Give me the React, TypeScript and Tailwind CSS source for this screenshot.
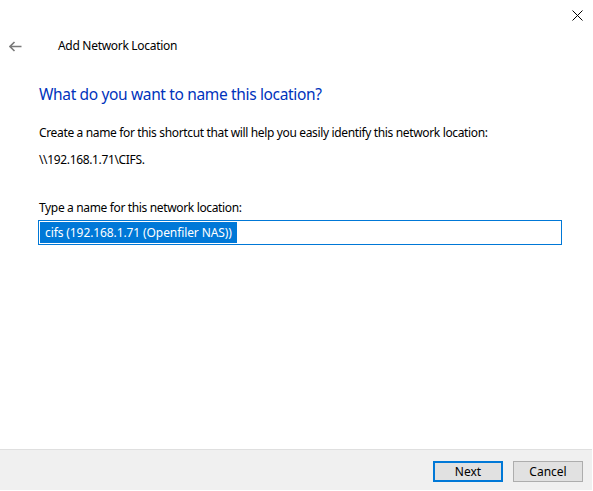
import React from "react";

export default function App() {
  const font = { fontFamily: '"Segoe UI", "Noto Sans", "Open Sans", sans-serif' };
  return (
    <div className="w-[593px] h-[491px] bg-white flex flex-col text-black overflow-hidden" style={font}>
      <div className="h-[32px] flex justify-end items-start">
        <div className="w-[30px] h-[30px] mr-[1px] flex items-center justify-center">
          <svg width="11" height="11" viewBox="0 0 11 11">
            <path d="M0.5 0.5 L10.5 10.5 M10.5 0.5 L0.5 10.5" stroke="#000" strokeWidth="1" />
          </svg>
        </div>
      </div>
      <div className="flex items-center h-[28px]">
        <div className="w-[58px] pl-[9px] flex items-center">
          <svg width="13" height="11" viewBox="0 0 13 11">
            <path d="M12.5 5.5 H1.5 M5.5 1 L1 5.5 L5.5 10" stroke="#7a7a7a" strokeWidth="1.6" fill="none" />
          </svg>
        </div>
        <div className="text-[12px] tracking-[-0.3px]">Add Network Location</div>
      </div>
      <div className="pl-[39px] pr-[31px] flex flex-col">
        <div className="mt-[24px] text-[15.5px] leading-[20px] text-[#0033bc] tracking-[-0.35px]">
          What do you want to name this location?
        </div>
        <div className="mt-[21px] text-[12px] leading-[16px] tracking-[-0.35px]">
          Create a name for this shortcut that will help you easily identify this network location:
        </div>
        <div className="mt-[11px] text-[12px] leading-[16px] tracking-[-0.35px]">\\192.168.1.71\CIFS.</div>
        <div className="mt-[32px] text-[12px] leading-[16px] tracking-[-0.35px]">Type a name for this network location:</div>
        <div className="mt-[4px] w-[524px] h-[25px] border border-[#0078d7] flex items-center pl-[1px] -ml-[1px]">
          <span className="bg-[#0078d7] text-white text-[12px] leading-[21px] h-[21px] px-[5px] tracking-[-0.1px]">
            cifs (192.168.1.71 (Openfiler NAS))
          </span>
        </div>
      </div>
      <div className="flex-1" />
      <div className="h-[41px] mb-[1px] mr-[1px] bg-[#f0f0f0] border-t border-[#dfdfdf] flex items-start justify-end pt-[11px] pr-[9px] gap-[10px]">
        <button className="w-[70px] h-[21px] bg-[#e1e1e1] border-2 border-[#0078d7] text-[12px] leading-[16px] flex items-center justify-center">
          Next
        </button>
        <button className="w-[70px] h-[21px] bg-[#e1e1e1] border border-[#adadad] text-[12px] leading-[16px] flex items-center justify-center">
          Cancel
        </button>
      </div>
    </div>
  );
}
